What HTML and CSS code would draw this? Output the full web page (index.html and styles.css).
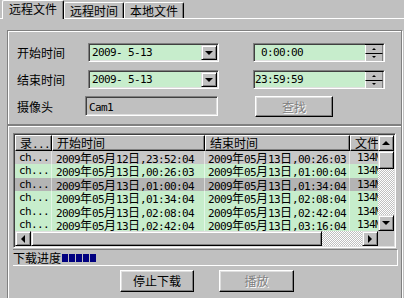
FILE: index.html
```html
<!DOCTYPE html>
<html lang="zh-CN">
<head>
    <meta charset="UTF-8">
    <meta name="viewport" content="width=device-width, initial-scale=1.0">
    <title>远程文件</title>
    <link rel="stylesheet" href="styles.css">
</head>
<body>
    <div class="tabs">
        <div class="tab active">远程文件</div>
        <div class="tab">远程时间</div>
        <div class="tab">本地文件</div>
    </div>

    <div class="page">
        <div class="group query">
            <div class="line">
                <span class="label">开始时间</span>
                <div class="combo sunken"><span class="value mono">2009- 5-13</span><span class="drop raised"><i class="arrow down"></i></span></div>
                <div class="timebox sunken"><span class="value mono"> 0:00:00</span><span class="spin"><span class="spin-btn"><i class="tiny up"></i></span><span class="spin-btn"><i class="tiny down"></i></span></span></div>
            </div>
            <div class="line second">
                <span class="label">结束时间</span>
                <div class="combo sunken"><span class="value mono">2009- 5-13</span><span class="drop raised"><i class="arrow down"></i></span></div>
                <div class="timebox sunken"><span class="value mono">23:59:59</span><span class="spin"><span class="spin-btn"><i class="tiny up"></i></span><span class="spin-btn"><i class="tiny down"></i></span></span></div>
            </div>
            <div class="line third">
                <span class="label">摄像头</span>
                <div class="cam sunken"><span class="mono">Cam1</span></div>
                <button class="btn find" disabled>查找</button>
            </div>
        </div>

        <div class="group result">
            <div class="list sunken">
                <div class="list-main">
                    <div class="list-head">
                        <span class="hcell c1">录<span class="mono">...</span></span>
                        <span class="hcell c2">开始时间</span>
                        <span class="hcell c3">结束时间</span>
                        <span class="hcell c4">文件</span>
                    </div>
                    <div class="row grey">
                        <span class="cell c1 mono">ch...</span>
                        <span class="cell c2 mono">2009<b>年</b>05<b>月</b>12<b>日</b>,23:52:04</span>
                        <span class="cell c3 mono">2009<b>年</b>05<b>月</b>13<b>日</b>,00:26:03</span>
                        <span class="cell c4 mono">134M</span>
                    </div>
                    <div class="row">
                        <span class="cell c1 mono">ch...</span>
                        <span class="cell c2 mono">2009<b>年</b>05<b>月</b>13<b>日</b>,00:26:03</span>
                        <span class="cell c3 mono">2009<b>年</b>05<b>月</b>13<b>日</b>,01:00:04</span>
                        <span class="cell c4 mono">134M</span>
                    </div>
                    <div class="row dark">
                        <span class="cell c1 mono">ch...</span>
                        <span class="cell c2 mono">2009<b>年</b>05<b>月</b>13<b>日</b>,01:00:04</span>
                        <span class="cell c3 mono">2009<b>年</b>05<b>月</b>13<b>日</b>,01:34:04</span>
                        <span class="cell c4 mono">134M</span>
                    </div>
                    <div class="row">
                        <span class="cell c1 mono">ch...</span>
                        <span class="cell c2 mono">2009<b>年</b>05<b>月</b>13<b>日</b>,01:34:04</span>
                        <span class="cell c3 mono">2009<b>年</b>05<b>月</b>13<b>日</b>,02:08:04</span>
                        <span class="cell c4 mono">134M</span>
                    </div>
                    <div class="row">
                        <span class="cell c1 mono">ch...</span>
                        <span class="cell c2 mono">2009<b>年</b>05<b>月</b>13<b>日</b>,02:08:04</span>
                        <span class="cell c3 mono">2009<b>年</b>05<b>月</b>13<b>日</b>,02:42:04</span>
                        <span class="cell c4 mono">134M</span>
                    </div>
                    <div class="row">
                        <span class="cell c1 mono">ch...</span>
                        <span class="cell c2 mono">2009<b>年</b>05<b>月</b>13<b>日</b>,02:42:04</span>
                        <span class="cell c3 mono">2009<b>年</b>05<b>月</b>13<b>日</b>,03:16:04</span>
                        <span class="cell c4 mono">134M</span>
                    </div>
                </div>
                <div class="vscroll">
                    <span class="sbtn raised"><i class="arrow up"></i></span>
                    <span class="thumb raised"></span>
                    <span class="track"></span>
                    <span class="sbtn raised"><i class="arrow down"></i></span>
                </div>
                <div class="hscroll">
                    <span class="sbtn raised"><i class="arrow left"></i></span>
                    <span class="thumb raised"></span>
                    <span class="track"></span>
                    <span class="sbtn raised"><i class="arrow right"></i></span>
                </div>
                <div class="corner"></div>
            </div>

            <div class="status">
                <span class="status-label">下载进度</span>
                <span class="blocks"><i></i><i></i><i></i><i></i><i></i></span>
            </div>

            <div class="actions">
                <button class="btn stop">停止下载</button>
                <button class="btn play" disabled>播放</button>
            </div>
        </div>
    </div>
</body>
</html>
```

FILE: styles.css
```css
/* old win32 dialog look */
* {
    box-sizing: border-box;
}
body {
    margin: 0;
    width: 404px;
    height: 298px;
    overflow: hidden;
    background-color: #c0c0c0;
    color: #000;
    font: 12px/14px "Noto Sans CJK SC", sans-serif;
}
/* 6px wide latin like the old bitmap font, cjk kept at 12px */
.mono {
    font-family: "DejaVu Sans Mono", "Liberation Mono", monospace;
    font-size: 11px;
    letter-spacing: -0.62px;
    white-space: pre;
}
.mono b {
    font: 12px "Noto Sans CJK SC", sans-serif;
    line-height: inherit;
    letter-spacing: 0;
}

/* bevels */
.sunken {
    border: 1px solid;
    border-color: #808080 #fff #fff #808080;
    box-shadow: inset 1px 1px 0 #404040, inset -1px -1px 0 #dfdfdf;
}
.raised {
    border: 1px solid;
    border-color: #dfdfdf #000 #000 #dfdfdf;
    box-shadow: inset 1px 1px 0 #fff, inset -1px -1px 0 #808080;
    background-color: #c0c0c0;
}

/* tabs */
.tabs {
    display: flex;
    align-items: flex-end;
    height: 18px;
    padding-left: 2px;
}
.tab {
    height: 16px;
    padding: 0 5px;
    border: 1px solid;
    border-color: #fff #000 transparent #fff;
    border-bottom: none;
    border-radius: 2px 2px 0 0;
    box-shadow: inset -1px 0 0 #808080;
    line-height: 16px;
}
.tab.active {
    position: relative;
    z-index: 1;
    height: 19px;
    margin-bottom: -1px;
    padding: 0 6px;
    line-height: 15px;
    background-color: #c0c0c0;
}
.page {
    border-top: 1px solid #fff;
    height: 280px;
    overflow: hidden;
}

/* group boxes */
.group {
    width: 395px;
    margin-left: 7px;
    border: 1px solid #808080;
    box-shadow: inset 1px 1px 0 #fff, 1px 1px 0 #fff;
}
.query {
    margin-top: 11px;
    height: 95px;
    padding: 12px 0 0 9px;
}
.result {
    height: 180px;
    padding: 7px 0 0 5px;
}

.line {
    display: flex;
    align-items: center;
    height: 19px;
}
.line.second {
    margin-top: 8px;
}
.line.third {
    margin-top: 7px;
    height: 21px;
}
.label {
    width: 71px;
}
.combo, .timebox {
    display: flex;
    align-items: center;
    width: 131px;
    height: 19px;
    padding: 1px 1px 1px 3px;
    background-color: #c7edcc;
}
.timebox {
    width: 132px;
    margin-left: 34px;
    padding-left: 1px;
}
.value {
    flex: 1;
    line-height: 15px;
}
.drop {
    width: 16px;
    height: 15px;
    display: flex;
    align-items: center;
    justify-content: center;
}
.spin {
    display: flex;
    flex-direction: column;
    width: 18px;
    height: 17px;
    border-top: 1px solid #000;
}
.spin-btn {
    flex: 1;
    display: flex;
    align-items: center;
    justify-content: center;
    background-color: #c0c0c0;
    border-right: 1px solid #808080;
    border-left: 1px solid #fff;
}
.spin-btn + .spin-btn {
    border-top: 1px solid #000;
}
.cam {
    width: 133px;
    height: 20px;
    margin-left: -3px;
    padding: 2px 3px;
    align-self: flex-start;
    line-height: 14px;
}
.btn {
    height: 21px;
    padding: 0;
    border: 1px solid;
    border-color: #fff #000 #000 #fff;
    box-shadow: inset -1px -1px 0 #808080, inset 1px 1px 0 #dfdfdf;
    background-color: #c0c0c0;
    font: 12px/14px "Noto Sans CJK SC", sans-serif;
    color: #000;
}
.btn:disabled {
    color: #808080;
    text-shadow: 1px 1px 0 #fff;
}
.find {
    width: 78px;
    margin-left: 37px;
}

/* arrows */
.arrow, .tiny {
    display: block;
    width: 0;
    height: 0;
    border: solid transparent;
}
.arrow.down {
    border-width: 4px 4px 0 4px;
    border-top-color: #000;
}
.arrow.up {
    border-width: 0 4px 4px 4px;
    border-bottom-color: #000;
}
.arrow.left {
    border-width: 4px 4px 4px 0;
    border-right-color: #000;
}
.arrow.right {
    border-width: 4px 0 4px 4px;
    border-left-color: #000;
}
.tiny.up {
    border-width: 0 2px 2px 2px;
    border-bottom-color: #000;
}
.tiny.down {
    border-width: 2px 2px 0 2px;
    border-top-color: #000;
}

/* list view */
.list {
    display: grid;
    grid-template-columns: 363px 16px;
    grid-template-rows: 96px 15px;
    width: 383px;
    height: 115px;
    padding: 1px;
}
.list-main {
    overflow: hidden;
    background-color: #fff;
}
.list-head, .row {
    display: flex;
    white-space: nowrap;
}
.hcell {
    flex: none;
    height: 16px;
    padding-left: 4px;
    border: 1px solid;
    border-color: #fff #000 #000 #fff;
    box-shadow: inset -1px -1px 0 #808080;
    background-color: #c0c0c0;
    line-height: 14px;
    overflow-x: clip;
}
.c1 { width: 37px; }
.c2 { width: 153px; }
.c3 { width: 145px; }
.c4 { width: 60px; }
.row {
    height: 13.4px;
    background-color: #c7edcc;
}
.row.grey {
    background-color: #c8c8c8;
}
.row.dark {
    background-color: #b4b4b4;
}
.cell {
    flex: none;
    padding-left: 4px;
    border-right: 1px solid rgba(255, 255, 255, 0.5);
    line-height: 13.4px;
}
.cell.c3 {
    padding-left: 3px;
}
.cell.c4 {
    width: 28px;
    padding-left: 7px;
    border-right: none;
    overflow-x: clip;
}

.vscroll, .hscroll {
    display: flex;
    background-color: #c0c0c0;
}
.vscroll {
    flex-direction: column;
}
.sbtn {
    flex: none;
    width: 16px;
    height: 16px;
    display: flex;
    align-items: center;
    justify-content: center;
}
.hscroll .sbtn {
    height: 15px;
}
.vscroll .thumb {
    height: 18px;
}
.hscroll .thumb {
    width: 291px;
}
.track {
    flex: 1;
    background: repeating-conic-gradient(#fff 0 25%, #c0c0c0 0 50%) 0 0 / 2px 2px;
}
.corner {
    background-color: #c0c0c0;
}

/* progress + buttons */
.status {
    display: flex;
    align-items: center;
    width: 385px;
    height: 17px;
    margin-top: 1px;
    border-top: 1px solid #808080;
    border-bottom: 1px solid #fff;
    border-right: 1px solid #fff;
}
.status-label {
    width: 49px;
}
.blocks {
    display: flex;
    gap: 1px;
}
.blocks i {
    width: 6px;
    height: 8px;
    background-color: #000080;
}
.actions {
    display: flex;
    gap: 25px;
    margin-top: 4px;
    padding-left: 107px;
}
.stop {
    width: 74px;
    height: 22px;
}
.play {
    width: 75px;
    height: 22px;
}
```
